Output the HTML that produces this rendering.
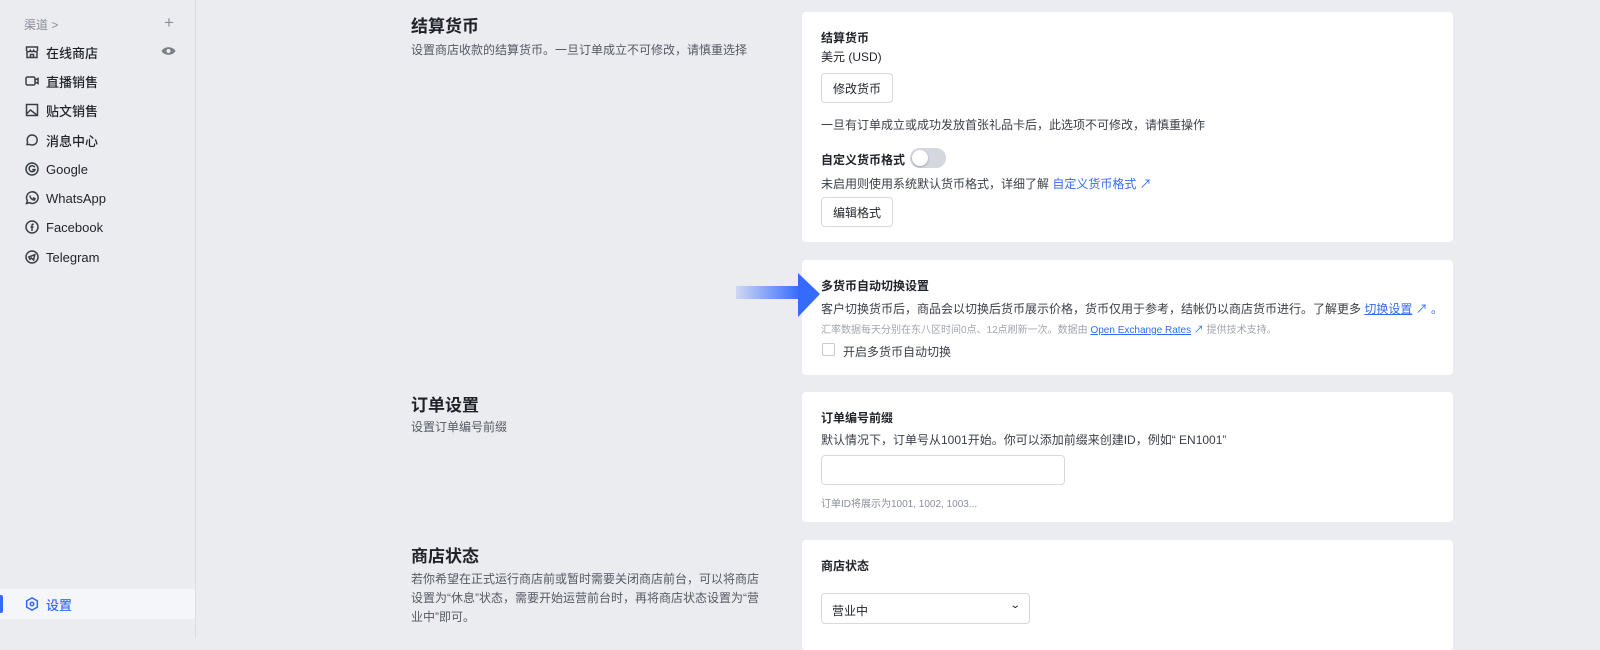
<!DOCTYPE html>
<html><head><meta charset="utf-8"><style>
*{box-sizing:border-box;margin:0;padding:0}
body{width:1600px;height:638px;overflow:hidden;background:#ebecf0;font-family:"Liberation Sans","Noto Sans CJK SC",sans-serif;color:#1f2329;position:relative}
.side{position:absolute;left:0;top:0;width:196px;height:638px;border-right:1px solid #dcdee3;background:#ebecf0}
.hd{position:absolute;left:24px;top:16px;font-size:12px;color:#8a8f99}
.plus{position:absolute;left:164px;top:13px;font-size:17px;color:#8a8f99}
.item{position:absolute;left:24px;height:20px;display:flex;align-items:center;font-size:13px;color:#1f2329;font-weight:500}
.item svg{width:16px;height:16px;margin-right:6px;stroke:#3a3f47;fill:none;stroke-width:1.5}
.set{position:absolute;left:0;top:589px;width:195px;height:30px;background:#f5f6fa}
.set .bar{position:absolute;left:0;top:6px;width:3px;height:18px;background:#356bfd;border-radius:0 2px 2px 0}
.card{position:absolute;left:802px;width:651px;background:#fff;border-radius:4px}
.ttl{position:absolute;left:411px;font-size:17px;font-weight:bold;color:#1f2329}
.desc{position:absolute;left:411px;font-size:12px;color:#555a63;line-height:19px;width:350px}
.t{position:absolute;left:19px;font-size:12px;color:#1f2329}
.b{font-weight:bold}
.btn{position:absolute;left:19px;width:72px;height:30px;border:1px solid #d6d9de;border-radius:4px;font-size:12px;display:flex;align-items:center;justify-content:center;color:#1f2329}
a{color:#356bfd;text-decoration:none}
.ul{text-decoration:underline}
</style></head><body>
<div class="side">
<div class="hd">渠道 &gt;</div><div class="plus">+</div>
<div class="item" style="top:42px"><svg viewBox="0 0 16 16"><path d="M2.5 3h11v3.5a2 2 0 0 1-3.7 0a2 2 0 0 1-3.6 0a2 2 0 0 1-3.7 0z M3 8v5.5h10V8 M6.5 13.5v-3h3v3"/></svg>在线商店</div>
<svg style="position:absolute;left:161px;top:45px" width="15" height="12" viewBox="0 0 15 12"><path d="M0.5 6C3 1 12 1 14.5 6C12 11 3 11 0.5 6z" fill="#7a7f88"/><circle cx="7.5" cy="6" r="2" fill="#ebecf0"/></svg>
<div class="item" style="top:71px"><svg viewBox="0 0 16 16"><rect x="2" y="4" width="9" height="8" rx="1.5"/><path d="M11 7l3-1.5v5L11 9"/></svg>直播销售</div>
<div class="item" style="top:100px"><svg viewBox="0 0 16 16"><rect x="2.5" y="2.5" width="11" height="11"/><path d="M2.5 12l4-4 7 5.5M9 6h.1"/></svg>贴文销售</div>
<div class="item" style="top:130px"><svg viewBox="0 0 16 16"><path d="M3 12.5l.6-2.5A5 5 0 1 1 6 12.5z M6 8h.1M8.5 8h.1M11 8h.1"/></svg>消息中心</div>
<div class="item" style="top:159px"><svg viewBox="0 0 16 16"><circle cx="8" cy="8" r="6"/><path d="M10.8 6.3A3 3 0 1 0 11 8.6H8.2"/></svg>Google</div>
<div class="item" style="top:188px"><svg viewBox="0 0 16 16"><path d="M2.5 13.5l.9-2.8A5.8 5.8 0 1 1 5.5 12.7z M6 5.5c0 2.5 2 4.5 4.5 4.5l.5-1.3-1.3-.7-.8.6"/></svg>WhatsApp</div>
<div class="item" style="top:217px"><svg viewBox="0 0 16 16"><circle cx="8" cy="8" r="6"/><path d="M9.8 5.3H9a1 1 0 0 0-1 1V12M6.5 8h3"/></svg>Facebook</div>
<div class="item" style="top:247px"><svg viewBox="0 0 16 16"><circle cx="8" cy="8" r="6"/><path d="M4.8 8l6-2.3-1.2 5.3-2.3-2-1.3 1.3z"/></svg>Telegram</div>
<div class="set"><div class="bar"></div><div class="item" style="top:5px;color:#356bfd"><svg viewBox="0 0 16 16" style="stroke:#356bfd"><path d="M8 1.8l5.3 3v6.4L8 14.2 2.7 11.2V4.8z"/><circle cx="8" cy="8" r="1.8"/></svg>设置</div></div>
</div>

<div class="ttl" style="top:12px">结算货币</div>
<div class="desc" style="top:41px">设置商店收款的结算货币。一旦订单成立不可修改，请慎重选择</div>
<div class="ttl" style="top:391px">订单设置</div>
<div class="desc" style="top:418px">设置订单编号前缀</div>
<div class="ttl" style="top:542px">商店状态</div>
<div class="desc" style="top:570px">若你希望在正式运行商店前或暂时需要关闭商店前台，可以将商店设置为“休息”状态，需要开始运营前台时，再将商店状态设置为“营业中”即可。</div>

<div class="card" style="top:12px;height:230px">
<div class="t b" style="top:17px">结算货币</div>
<div class="t" style="top:36px">美元 (USD)</div>
<div class="btn" style="top:61px">修改货币</div>
<div class="t" style="top:104px;color:#3a3f47">一旦有订单成立或成功发放首张礼品卡后，此选项不可修改，请慎重操作</div>
<div class="t b" style="top:139px">自定义货币格式</div>
<div style="position:absolute;left:108px;top:136px;width:36px;height:20px;border-radius:10px;background:#d4d7de"><div style="position:absolute;left:2px;top:2px;width:16px;height:16px;border-radius:50%;background:#fff;box-shadow:0 1px 2px rgba(0,0,0,.25)"></div></div>
<div class="t" style="top:163px;color:#3a3f47">未启用则使用系统默认货币格式，详细了解 <a>自定义货币格式 ↗</a></div>
<div class="btn" style="top:185px">编辑格式</div>
</div>

<div class="card" style="top:260px;height:115px">
<div class="t b" style="top:17px">多货币自动切换设置</div>
<div class="t" style="top:40px;color:#3a3f47">客户切换货币后，商品会以切换后货币展示价格，货币仅用于参考，结帐仍以商店货币进行。了解更多 <a class="ul">切换设置</a> <a>↗ 。</a></div>
<div class="t" style="top:61px;font-size:10px;color:#a0a5ae">汇率数据每天分别在东八区时间0点、12点刷新一次。数据由 <a class="ul">Open Exchange Rates</a> <a>↗</a> 提供技术支持。</div>
<div style="position:absolute;left:20px;top:83px;width:13px;height:13px;border:1px solid #c5c9d0;border-radius:2px"></div>
<div class="t" style="top:83px;left:41px;color:#3a3f47">开启多货币自动切换</div>
</div>

<svg style="position:absolute;left:736px;top:273px;z-index:5" width="84" height="44" viewBox="0 0 84 44"><defs><linearGradient id="g" x1="0" x2="1"><stop offset="0" stop-color="#356bfd" stop-opacity=".15"/><stop offset="1" stop-color="#356bfd"/></linearGradient></defs><rect x="0" y="13" width="64" height="13" fill="url(#g)"/><path d="M62 0L84 21L62 44z" fill="#356bfd"/></svg>

<div class="card" style="top:392px;height:130px">
<div class="t b" style="top:17px">订单编号前缀</div>
<div class="t" style="top:39px;color:#3a3f47">默认情况下，订单号从1001开始。你可以添加前缀来创建ID，例如“ EN1001”</div>
<div style="position:absolute;left:19px;top:63px;width:244px;height:30px;border:1px solid #d6d9de;border-radius:4px"></div>
<div class="t" style="top:103px;font-size:10px;color:#8a8f99">订单ID将展示为1001, 1002, 1003...</div>
</div>

<div class="card" style="top:540px;height:110px">
<div class="t b" style="top:17px">商店状态</div>
<div style="position:absolute;left:19px;top:53px;width:209px;height:31px;border:1px solid #d6d9de;border-radius:4px;font-size:12px;padding:8px 10px;color:#1f2329">营业中<span style="position:absolute;right:10px;top:6px;font-size:10px;transform:scaleX(1.4)">⌄</span></div>
</div>
</body></html>
